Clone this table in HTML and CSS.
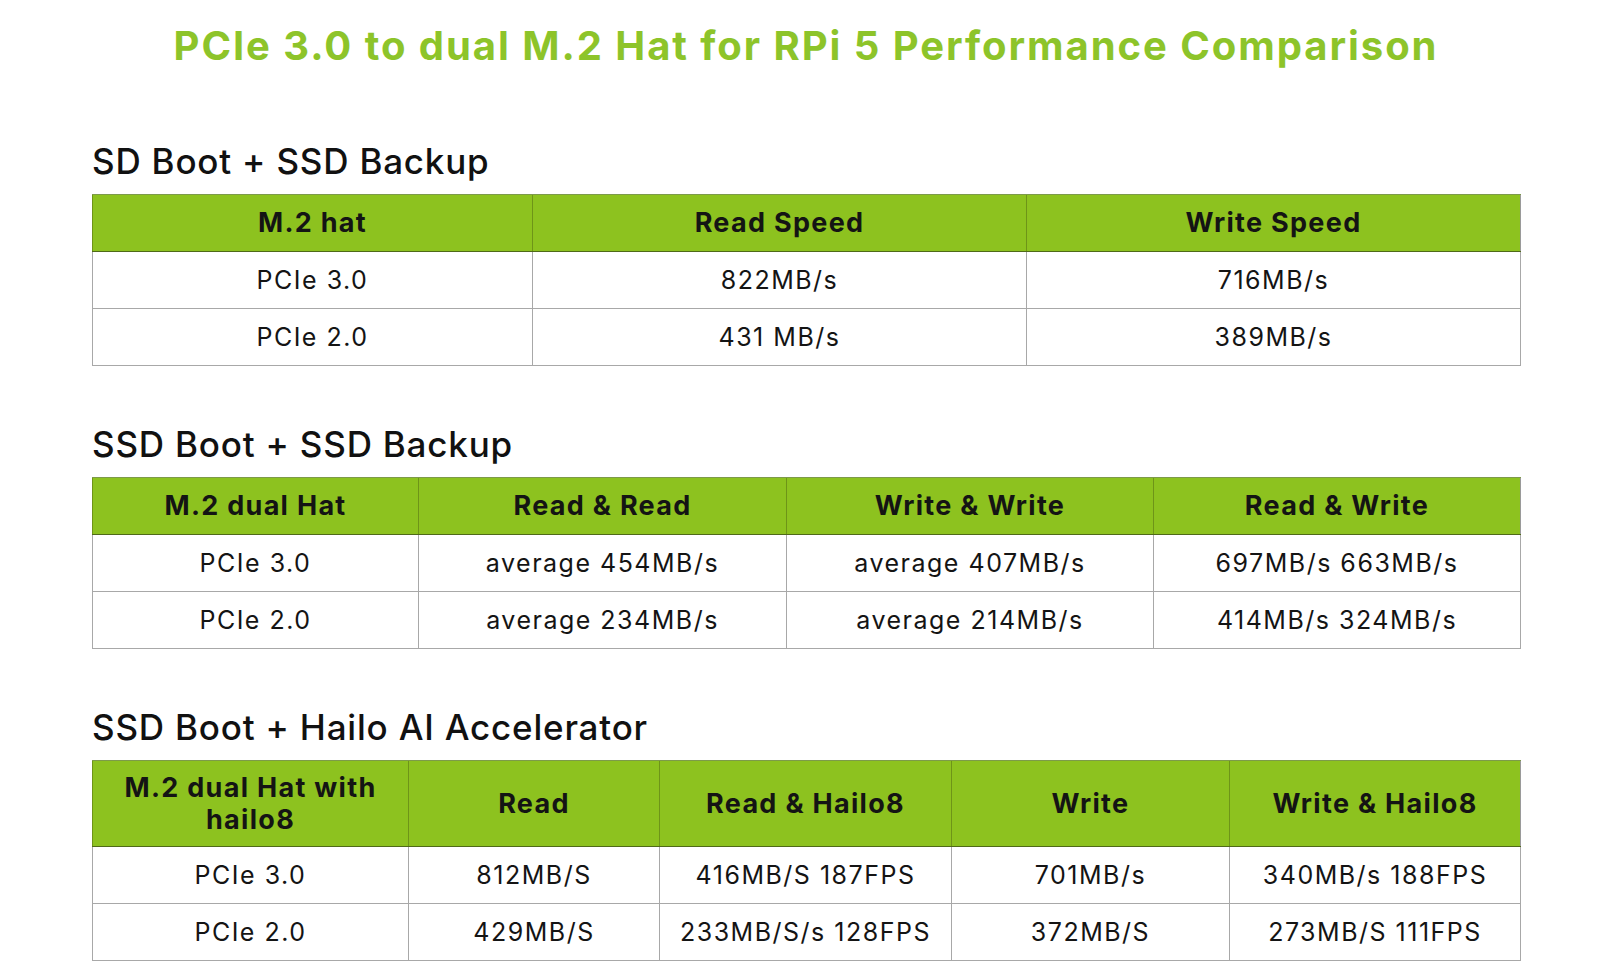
FILE: index.html
```html
<!DOCTYPE html>
<html lang="en">
<head>
<meta charset="utf-8">
<title>PCIe 3.0 to dual M.2 Hat for RPi 5 Performance Comparison</title>
<link rel="stylesheet" href="styles.css">
</head>
<body>
<main class="page">
  <h1 class="title">PCIe 3.0 to dual M.2 Hat for RPi 5 Performance Comparison</h1>

  <section class="block">
    <h2 class="block-title">SD Boot + SSD Backup</h2>
    <table class="perf t1">
      <colgroup><col class="c1"><col class="c2"><col class="c3"></colgroup>
      <thead>
        <tr><th>M.2 hat</th><th>Read Speed</th><th>Write Speed</th></tr>
      </thead>
      <tbody>
        <tr><td>PCIe 3.0</td><td>822MB/s</td><td>716MB/s</td></tr>
        <tr><td>PCIe 2.0</td><td>431 MB/s</td><td>389MB/s</td></tr>
      </tbody>
    </table>
  </section>

  <section class="block">
    <h2 class="block-title">SSD Boot + SSD Backup</h2>
    <table class="perf t2">
      <colgroup><col class="c1"><col class="c2"><col class="c3"><col class="c4"></colgroup>
      <thead>
        <tr><th>M.2 dual Hat</th><th>Read &amp; Read</th><th>Write &amp; Write</th><th>Read &amp; Write</th></tr>
      </thead>
      <tbody>
        <tr><td>PCIe 3.0</td><td>average 454MB/s</td><td>average 407MB/s</td><td>697MB/s 663MB/s</td></tr>
        <tr><td>PCIe 2.0</td><td>average 234MB/s</td><td>average 214MB/s</td><td>414MB/s 324MB/s</td></tr>
      </tbody>
    </table>
  </section>

  <section class="block">
    <h2 class="block-title">SSD Boot + Hailo AI Accelerator</h2>
    <table class="perf t3">
      <colgroup><col class="c1"><col class="c2"><col class="c3"><col class="c4"><col class="c5"></colgroup>
      <thead>
        <tr><th>M.2 dual Hat with<br>hailo8</th><th>Read</th><th>Read &amp; Hailo8</th><th>Write</th><th>Write &amp; Hailo8</th></tr>
      </thead>
      <tbody>
        <tr><td>PCIe 3.0</td><td>812MB/S</td><td>416MB/S 187FPS</td><td>701MB/s</td><td>340MB/s 188FPS</td></tr>
        <tr><td>PCIe 2.0</td><td>429MB/S</td><td>233MB/S/s 128FPS</td><td>372MB/S</td><td>273MB/S 111FPS</td></tr>
      </tbody>
    </table>
  </section>
</main>
</body>
</html>
```

FILE: styles.css
```css
html, body {
  margin: 0;
  padding: 0;
  background: #ffffff;
}

body {
  font-family: Inter, "Open Sans", "DejaVu Sans", sans-serif;
  color: #111111;
}

.page {
  width: 1428px;
  padding: 22px 0 0 92px;
  display: flex;
  flex-direction: column;
}

.title {
  margin: 0;
  font-size: 40px;
  line-height: 48px;
  font-weight: 700;
  color: #8dc42a;
  text-align: center;
  letter-spacing: 1.95px;
}

.block {
  display: flex;
  flex-direction: column;
}

.block-title {
  margin: 0;
  font-size: 35px;
  line-height: 40px;
  font-weight: 500;
  color: #111111;
  letter-spacing: 0.8px;
}

.block:nth-of-type(1) .block-title { margin-top: 71px; }
.block:nth-of-type(2) .block-title,
.block:nth-of-type(3) .block-title { margin-top: 58px; }

.perf {
  margin-top: 13px;
  width: 1428px;
  border-collapse: collapse;
  table-layout: fixed;
  border: 1px solid #9a9a9a;
}

.perf th {
  background: #8dc21f;
  font-size: 27px;
  font-weight: 700;
  letter-spacing: 1.3px;
  color: #141414;
  height: 56px;
  padding: 0 8px;
  border-left: 1px solid #6e9418;
  border-top: 1px solid #7d9a4a;
  border-bottom: 1px solid #4f6a18;
  text-align: center;
  vertical-align: middle;
  line-height: 32px;
}

.perf td {
  font-size: 25px;
  font-weight: 400;
  letter-spacing: 1.5px;
  color: #141414;
  height: 56px;
  padding: 0 8px;
  border: 1px solid #a8a8a8;
  text-align: center;
  vertical-align: middle;
}

.t3 th { height: 85px; }

.t1 .c1 { width: 440px; }
.t1 .c2 { width: 494px; }
.t1 .c3 { width: 494px; }

.t2 .c1 { width: 326px; }
.t2 .c2 { width: 368px; }
.t2 .c3 { width: 367px; }
.t2 .c4 { width: 367px; }

.t3 .c1 { width: 316px; }
.t3 .c2 { width: 251px; }
.t3 .c3 { width: 292px; }
.t3 .c4 { width: 278px; }
.t3 .c5 { width: 291px; }
```
